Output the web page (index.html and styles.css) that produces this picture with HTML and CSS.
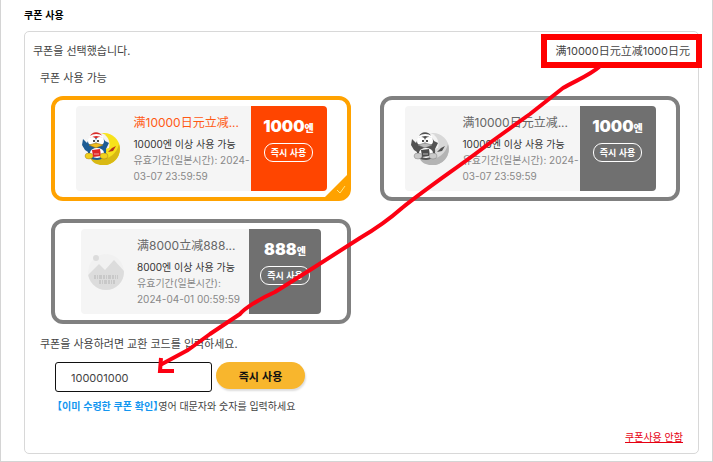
FILE: index.html
```html
<!DOCTYPE html>
<html lang="ko">
<head>
<meta charset="utf-8">
<title>쿠폰 사용</title>
<link rel="stylesheet" href="styles.css">
</head>
<body>
<svg class="defs" aria-hidden="true">
  <symbol id="penguin" viewBox="0 0 38 34">
    <circle cx="22" cy="17" r="16" fill="#f7e21b"/>
    <path d="M20 33A16 16 0 0 0 37 12C34 24 24 30 8 26C11 31 15 33 20 33Z" fill="#d9b914"/>
    <path d="M17 1C25 1 29 9 27 16L20 18L12 5Z" fill="#f5f3ee"/>
    <path d="M5 11L1 7L0 13L3 18L6 20C5 25 9 28 15 28C21 28 25 24 24 17L27 11L23 9C21 3 8 3 5 11Z" fill="#1d5c94"/>
    <path d="M8 5C9-1 18-1 20 4L19 6H8Z" fill="#d92d2a"/>
    <path d="M8 5Q14 1 21 5" fill="none" stroke="#fff" stroke-width="2"/>
    <circle cx="10" cy="9" r="4" fill="#fff"/><circle cx="18" cy="9" r="4" fill="#fff"/>
    <circle cx="12" cy="9" r="1" fill="#111"/><circle cx="16" cy="9" r="1" fill="#111"/>
    <path d="M7 13L14 11L21 13L14 16Z" fill="#efbd20" stroke="#9b7420" stroke-width=".6"/>
    <ellipse cx="15" cy="21" rx="7" ry="5" fill="#fff"/>
    <path d="M10 18L18 17L19 24L11 25Z" fill="#df2626"/>
    <path d="M12 22L17 22" stroke="#fff" stroke-width=".6"/>
    <ellipse cx="7" cy="24" rx="4" ry="3" fill="#f3d01c" stroke="#8b671b" stroke-width=".4"/>
    <ellipse cx="22" cy="24" rx="4" ry="3" fill="#f3d01c" stroke="#8b671b" stroke-width=".4"/>
    <path d="M26 20L30 16L34 14L31 19Z" fill="#b8331d"/>
  </symbol>
</svg>
<main class="page">
  <h1 class="heading">쿠폰 사용</h1>
  <section class="panel">
    <header class="summary">
      <p class="summary-text">쿠폰을 선택했습니다.</p>
      <p class="selected">满10000日元立减1000日元</p>
    </header>
    <h2 class="label">쿠폰 사용 가능</h2>
    <div class="coupons">
      <article class="coupon active">
        <div class="ticket">
          <svg class="logo" role="img" aria-label="쿠폰"><use href="#penguin"/></svg>
          <div class="info">
            <h3 class="title">满10000日元立减...</h3>
            <p class="terms">10000엔 이상 사용 가능</p>
            <p class="period">유효기간(일본시간): 2024-03-07 23:59:59</p>
          </div>
          <div class="value">
            <p class="amount">1000<small class="unit">엔</small></p>
            <button class="use" type="button">즉시 사용</button>
          </div>
        </div>
        <svg class="check" viewBox="0 0 22 22" aria-hidden="true"><path d="M22 0V22H0Z" fill="#ffa200"/><path d="M12 15L15 18L20 11" fill="none" stroke="#ffe680"/></svg>
      </article>
      <article class="coupon">
        <div class="ticket">
          <svg class="logo gray" role="img" aria-label="쿠폰"><use href="#penguin"/></svg>
          <div class="info">
            <h3 class="title">满10000日元立减...</h3>
            <p class="terms">10000엔 이상 사용 가능</p>
            <p class="period">유효기간(일본시간): 2024-03-07 23:59:59</p>
          </div>
          <div class="value">
            <p class="amount">1000<small class="unit">엔</small></p>
            <button class="use" type="button">즉시 사용</button>
          </div>
        </div>
      </article>
      <article class="coupon">
        <div class="ticket narrow">
          <svg class="logo" viewBox="0 0 38 38" role="img" aria-label="이미지 없음">
            <defs><clipPath id="disc"><circle cx="19" cy="19" r="18"/></clipPath></defs>
            <g clip-path="url(#disc)"><circle cx="19" cy="19" r="18" fill="#f1f1f1"/><path d="M0 23L12 11L18 17L27 7L38 19V38H0Z" fill="#dcdcdc"/></g>
            <circle cx="9" cy="5" r="3" fill="#dcdcdc"/>
            <path d="M7 24H31M12 29H28" stroke="#b4b4b4" stroke-width="3" stroke-dasharray="2 1 1 1 3 1"/>
            <path d="M7 24H31M12 29H28" stroke="#dcdcdc" stroke-width="1"/>
          </svg>
          <div class="info">
            <h3 class="title">满8000立减888...</h3>
            <p class="terms">8000엔 이상 사용 가능</p>
            <p class="period">유효기간(일본시간): 2024-04-01 00:59:59</p>
          </div>
          <div class="value">
            <p class="amount">888<small class="unit">엔</small></p>
            <button class="use" type="button">즉시 사용</button>
          </div>
        </div>
      </article>
    </div>
    <form class="redeem">
      <label class="label" for="code">쿠폰을 사용하려면 교환 코드를 입력하세요.</label>
      <div class="entry">
        <input class="code" id="code" type="text" value="100001000">
        <button class="submit" type="button">즉시 사용</button>
      </div>
      <p class="hint"><a class="received" href="#">【이미 수령한 쿠폰 확인】</a>영어 대문자와 숫자를 입력하세요</p>
    </form>
    <footer class="footer"><a class="skip" href="#">쿠폰사용 안함</a></footer>
  </section>
  <svg class="arrow" viewBox="0 0 713 462" aria-hidden="true">
    <path d="M599 67C590 75 577 80 563 88L530 114L491 142C463 164 432 184 402 208C385 223 372 231 360 238L310 270L275 292C257 300 244 309 240 314L210 334L188 350L162 364"/>
    <path d="M161 358L160 371L174 371" class="arrow-head"/>
  </svg>
</main>
</body>
</html>
```
FILE: styles.css
```css
* { box-sizing: border-box; }
body {
  margin: 0;
  color: #444;
  background: #fff;
  font: 11px/16px "Noto Sans CJK KR", sans-serif;
}
h1, h2, h3, p { margin: 0; font-weight: 400; font-size: 11px; }
button, input { font: inherit; }
.defs { position: absolute; width: 0; height: 0; }
.page {
  position: relative;
  min-height: 100vh;
  padding: 7px 13px 7px 23px;
  border: 1px solid #d4d4d4;
  border-top: 0;
}
.heading { margin-bottom: 8px; color: #000; font-size: 10px; font-weight: 700; }
.panel { border: 1px solid #d8d8d8; border-radius: 5px; padding: 0 18px 8px 15px; }
.summary {
  display: flex;
  align-items: flex-start;
  justify-content: space-between;
  margin: 0 -22px 0 -7px;
}
.summary-text { padding-top: 10px; }
.selected {
  margin-top: 2px;
  padding: 3px 6px 3px 8px;
  border: 6px solid #f00;
}
.selected, .info, .amount, .code { font-family: Inter, "Noto Sans CJK KR", sans-serif; }
.label { display: block; }
.coupons {
  display: grid;
  grid-template-columns: 1fr 1fr;
  gap: 18px 29px;
  margin: 11px 0 11px 11px;
}
.summary + .label { margin-top: 1px; }
.coupon {
  position: relative;
  display: flex;
  justify-content: center;
  padding: 6px 0;
  border: 4px solid #808080;
  border-radius: 12px;
}
.active { border-color: #ffa200; }
.ticket {
  display: grid;
  grid-template-columns: 38px 1fr 76px;
  width: 251px;
  height: 85px;
  padding-left: 6px;
  border-radius: 4px;
  overflow: hidden;
  background: #f5f5f5;
}
.narrow { width: 240px; grid-template-columns: 38px 1fr 72px; }
.logo { width: 38px; height: 38px; align-self: center; }
.gray { filter: grayscale(1); }
.info { min-width: 0; padding: 9px 0 0 14px; }
.narrow .info { padding: 9px 8px 0 12px; }
.title {
  margin-bottom: 5px;
  color: #666;
  font-size: 12px;
  white-space: nowrap;
}
.active .title { color: #ff5a14; }
.terms, .period { font-size: 10px; }
.terms { color: #333; }
.period { color: #888; }
.value {
  display: flex;
  flex-direction: column;
  align-items: center;
  padding-top: 8px;
  color: #fff;
  background: #707070;
}
.active .value { background: #ff4500; }
.amount { height: 24px; font-size: 16px; font-weight: 900; line-height: 24px; }
.unit { font-size: 10px; line-height: 1; }
.use {
  height: 19px;
  margin-top: 5px;
  padding: 0 6px;
  border: 1px solid #fff;
  border-radius: 9px;
  color: #fff;
  background: transparent;
  font-size: 9px;
  font-weight: 700;
  line-height: 16px;
}
.check { position: absolute; right: 0; bottom: 0; width: 22px; height: 22px; }
.entry { display: flex; align-items: flex-start; gap: 4px; margin: 11px 0 6px 15px; }
.code {
  width: 157px;
  height: 30px;
  padding: 1px 15px 0;
  border: 1px solid #111;
  border-radius: 3px;
  color: #444;
  background: #fff;
}
.submit {
  width: 89px;
  height: 27px;
  padding: 0;
  border: 0;
  border-radius: 14px;
  color: #111;
  background: #f8b62d;
  box-shadow: 1px 2px 2px #ddd;
  font-weight: 700;
}
.hint { margin-left: 17px; font-size: 10px; }
.received {
  color: #1296f0;
  font-weight: 700;
  font-feature-settings: "halt";
  text-decoration: none;
}
.footer { margin: 14px -3px 0 0; text-align: right; }
.skip { color: #e60012; font-size: 10px; }
.arrow {
  position: absolute;
  top: 0;
  left: -1px;
  width: 713px;
  height: 462px;
  fill: none;
  stroke: #fc0012;
  stroke-width: 4px;
  stroke-linecap: round;
  stroke-linejoin: round;
  pointer-events: none;
}
.arrow-head { stroke-linecap: butt; stroke-linejoin: miter; }
```
